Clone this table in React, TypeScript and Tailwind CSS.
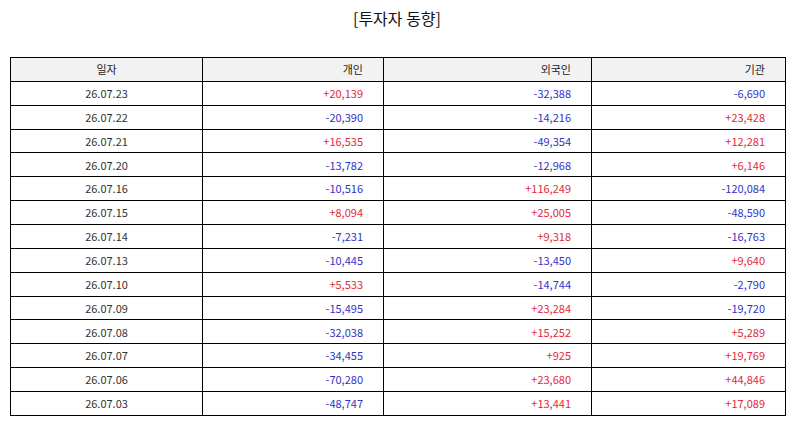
import * as React from 'react';

type Row = { date: string; person: string; foreign: string; inst: string };

const rows: Row[] = [
    { date: '26.07.23', person: '+20,139', foreign: '-32,388', inst: '-6,690' },
    { date: '26.07.22', person: '-20,390', foreign: '-14,216', inst: '+23,428' },
    { date: '26.07.21', person: '+16,535', foreign: '-49,354', inst: '+12,281' },
    { date: '26.07.20', person: '-13,782', foreign: '-12,968', inst: '+6,146' },
    { date: '26.07.16', person: '-10,516', foreign: '+116,249', inst: '-120,084' },
    { date: '26.07.15', person: '+8,094', foreign: '+25,005', inst: '-48,590' },
    { date: '26.07.14', person: '-7,231', foreign: '+9,318', inst: '-16,763' },
    { date: '26.07.13', person: '-10,445', foreign: '-13,450', inst: '+9,640' },
    { date: '26.07.10', person: '+5,533', foreign: '-14,744', inst: '-2,790' },
    { date: '26.07.09', person: '-15,495', foreign: '+23,284', inst: '-19,720' },
    { date: '26.07.08', person: '-32,038', foreign: '+15,252', inst: '+5,289' },
    { date: '26.07.07', person: '-34,455', foreign: '+925', inst: '+19,769' },
    { date: '26.07.06', person: '-70,280', foreign: '+23,680', inst: '+44,846' },
    { date: '26.07.03', person: '-48,747', foreign: '+13,441', inst: '+17,089' },
];

function Num({ value }: { value: string }) {
    const color = value.startsWith('+') ? 'text-[#e3283a]' : 'text-[#3232c8]';
    return <td className={`border border-black text-right pr-[20px] ${color}`}>{value}</td>;
}

export default function App() {
    return (
        <div
            className="w-[794px] h-[425px] bg-white px-[10px] pt-[6px]"
            style={{ fontFamily: '"Noto Sans CJK KR", "Noto Sans", sans-serif' }}
        >
            <h1 className="text-center text-[16px] leading-[24px] text-[#111] mb-[27px]">[투자자 동향]</h1>
            <table className="w-[775px] border-collapse table-fixed text-[11px] text-[#333]">
                <colgroup>
                    <col className="w-[192px]" />
                    <col className="w-[181px]" />
                    <col className="w-[208px]" />
                    <col className="w-[194px]" />
                </colgroup>
                <thead>
                    <tr className="h-[23.87px] bg-[#f2f2f2] text-[#222]">
                        <th className="border border-black font-normal text-center">일자</th>
                        <th className="border border-black font-normal text-right pr-[20px]">개인</th>
                        <th className="border border-black font-normal text-right pr-[20px]">외국인</th>
                        <th className="border border-black font-normal text-right pr-[20px]">기관</th>
                    </tr>
                </thead>
                <tbody>
                    {rows.map((r) => (
                        <tr key={r.date} className="h-[23.87px]">
                            <td className="border border-black text-center">{r.date}</td>
                            <Num value={r.person} />
                            <Num value={r.foreign} />
                            <Num value={r.inst} />
                        </tr>
                    ))}
                </tbody>
            </table>
        </div>
    );
}
